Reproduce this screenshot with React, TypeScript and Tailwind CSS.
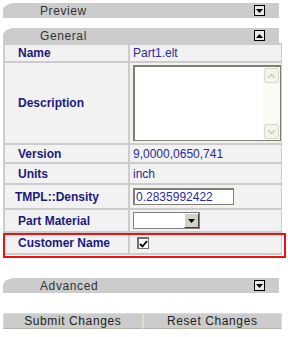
import React from "react";

const font = { fontFamily: '"Liberation Sans", Arial, sans-serif' };

function Toggle({ up }: { up?: boolean }) {
  return (
    <div className="w-[11px] h-[11px] border border-black bg-[#e8e8e8] flex items-center justify-center">
      <svg width="7" height="4" viewBox="0 0 7 4">
        {up ? <polygon points="0,4 7,4 3.5,0" fill="#000" /> : <polygon points="0,0 7,0 3.5,4" fill="#000" />}
      </svg>
    </div>
  );
}

function Bar({ title, up }: { title: string; up?: boolean }) {
  return (
    <div className="h-[15px] mx-[3px] w-[276px] bg-[#cccccc] rounded-tl-[12px_8px] flex items-center">
      <span className="ml-[37px] text-[12px] leading-none text-[#333] tracking-[0.6px]">{title}</span>
      <div className="ml-auto mr-[14px]">
        <Toggle up={up} />
      </div>
    </div>
  );
}

function Label({ children, className = "" }: { children: React.ReactNode; className?: string }) {
  return (
    <div className={`bg-[#f2f2f2] flex items-center text-[12px] font-bold text-[#1a1a80] ${className}`}>
      {children}
    </div>
  );
}

function Value({ children, className = "" }: { children?: React.ReactNode; className?: string }) {
  return (
    <div className={`bg-[#f2f2f2] flex items-center pl-[3px] text-[12px] text-[#2a2aa0] ${className}`}>
      {children}
    </div>
  );
}

export default function App() {
  return (
    <div className="w-[288px] h-[337px] bg-white pt-[3px] overflow-hidden" style={font}>
      <Bar title="Preview" />
      <div className="h-[10px]" />
      <Bar title="General" up />

      <div className="mx-[3px] w-[279px] bg-[#cccccc] p-[2px] grid grid-cols-[123px_1fr] gap-[2px]">
        <Label className="h-[16px] pl-[13px]">Name</Label>
        <Value className="h-[16px]">Part1.elt</Value>

        <Label className="h-[80px] pl-[13px]">Description</Label>
        <Value className="h-[80px]">
          <div className="w-[148px] h-[76px] bg-white border border-[#7f7f6f] border-t-[2px] border-l-[2px] flex justify-end">
            <div className="w-[17px] h-full bg-[#fbfbf5] flex flex-col justify-between p-[1px]">
              <div className="h-[15px] rounded-[2px] border border-[#d8d8cc] bg-[#f4f4ec] flex items-center justify-center">
                <svg width="7" height="4" viewBox="0 0 7 4"><polyline points="0,4 3.5,0.5 7,4" fill="none" stroke="#c0c0b8" strokeWidth="1.2" /></svg>
              </div>
              <div className="h-[15px] rounded-[2px] border border-[#d8d8cc] bg-[#f4f4ec] flex items-center justify-center">
                <svg width="7" height="4" viewBox="0 0 7 4"><polyline points="0,0 3.5,3.5 7,0" fill="none" stroke="#c0c0b8" strokeWidth="1.2" /></svg>
              </div>
            </div>
          </div>
        </Value>

        <Label className="h-[17px] pl-[13px]">Version</Label>
        <Value className="h-[17px]">9,0000,0650,741</Value>

        <Label className="h-[19px] pl-[13px]">Units</Label>
        <Value className="h-[19px]">inch</Value>

        <Label className="h-[23px] pl-[10px]">TMPL::Density</Label>
        <Value className="h-[23px]">
          <div className="w-[101px] h-[17px] bg-white border border-[#808070] border-t-[2px] border-l-[2px] flex items-center pl-[1px] leading-none">
            0.2835992422
          </div>
        </Value>

        <Label className="h-[21px] pl-[13px]">Part Material</Label>
        <Value className="h-[21px]">
          <div className="w-[67px] h-[17px] bg-white border border-[#7f7f7f] flex justify-end">
            <div className="w-[15px] h-full bg-[#d4d0c8] border-l border-t border-white border-r border-b border-r-[#404040] border-b-[#404040] flex items-center justify-center">
              <svg width="7" height="4" viewBox="0 0 7 4"><polygon points="0,0 7,0 3.5,4" fill="#000" /></svg>
            </div>
          </div>
        </Value>

        <Label className="h-[20px] pl-[13px]">Customer Name</Label>
        <Value className="h-[20px] pl-[7px]">
          <div className="w-[12px] h-[12px] bg-white border border-[#707070] border-t-[2px] border-l-[2px] flex items-center justify-center">
            <svg width="9" height="8" viewBox="0 0 9 8"><polyline points="1,4 3.5,6.5 8,1" fill="none" stroke="#000" strokeWidth="1.8" /></svg>
          </div>
        </Value>
      </div>

      <div className="h-[23px]" />
      <Bar title="Advanced" />
      <div className="h-[20px]" />

      <div className="mx-[3px] w-[279px] flex">
        <button className="flex-1 h-[16px] bg-[#cccccc] border border-[#e0dccc] border-b-[#b8b4a4] text-[12px] text-[#222] tracking-[0.6px] leading-none">
          Submit Changes
        </button>
        <button className="flex-1 h-[16px] bg-[#cccccc] border border-[#e0dccc] border-b-[#b8b4a4] text-[12px] text-[#222] tracking-[0.6px] leading-none">
          Reset Changes
        </button>
      </div>

      <div className="absolute left-[3px] top-[233px] w-[283px] h-[25px] border-2 border-[#ee1111] pointer-events-none" />
    </div>
  );
}
